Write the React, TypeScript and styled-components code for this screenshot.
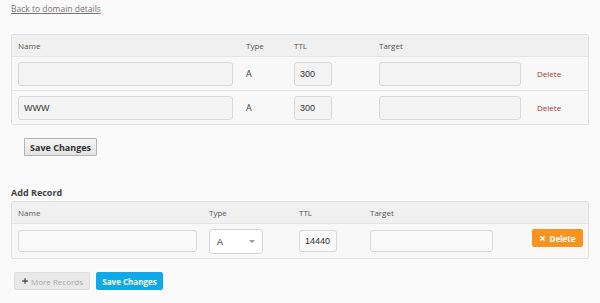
import React from "react";
import styled, { createGlobalStyle } from "styled-components";
import { Plus, X } from "lucide-react";

const GlobalStyle = createGlobalStyle`
  body {
    margin: 0;
    background: #fafafa;
    font-family: "Open Sans", "Liberation Sans", sans-serif;
    color: #555;
  }
`;

interface IRecord {
  name: string;
  type: string;
  ttl: string;
  target: string;
}

const records: IRecord[] = [
  { name: "", type: "A", ttl: "300", target: "" },
  { name: "WWW", type: "A", ttl: "300", target: "" },
];

export default function App() {
  return (
    <>
      <GlobalStyle />
      <Page>
        <BackLink href="#">Back to domain details</BackLink>

        <Table $top={19}>
          <HeadRow>
            <HeadCell>Name</HeadCell>
            <HeadCell>Type</HeadCell>
            <HeadCell>TTL</HeadCell>
            <HeadCell>Target</HeadCell>
            <HeadCell />
          </HeadRow>
          {records.map((r, i) => (
            <Row key={i}>
              <Field $width={215} defaultValue={r.name} />
              <TypeText>{r.type}</TypeText>
              <Field $width={38} defaultValue={r.ttl} />
              <Field $width={142} defaultValue={r.target} />
              <DeleteLink href="#">Delete</DeleteLink>
            </Row>
          ))}
        </Table>

        <GreyButton>Save Changes</GreyButton>

        <SectionTitle>Add Record</SectionTitle>
        <Table $top={2}>
          <AddHeadRow>
            <HeadCell>Name</HeadCell>
            <HeadCell>Type</HeadCell>
            <HeadCell>TTL</HeadCell>
            <HeadCell>Target</HeadCell>
            <HeadCell />
          </AddHeadRow>
          <AddRow>
            <Field $width={179} $light defaultValue="" />
            <SelectBox>
              <span>A</span>
              <Caret />
            </SelectBox>
            <Field $width={38} $light defaultValue="14440" />
            <Field $width={123} $light defaultValue="" />
            <OrangeButton>
              <X size={7} strokeWidth={5} />
              Delete
            </OrangeButton>
          </AddRow>
        </Table>

        <ButtonBar>
          <MoreButton>
            <Plus size={8} strokeWidth={4} color="#555" />
            More Records
          </MoreButton>
          <BlueButton>Save Changes</BlueButton>
        </ButtonBar>
      </Page>
    </>
  );
}

const Page = styled.div`
  width: 578px;
  padding: 0 11px;
  display: flex;
  flex-direction: column;
  align-items: flex-start;
`;

const BackLink = styled.a`
  margin-top: 3px;
  font-size: 8.5px;
  line-height: 12px;
  color: #777;
  text-decoration: underline;
`;

const Table = styled.div<{ $top: number }>`
  align-self: stretch;
  margin-top: ${(p) => p.$top}px;
  border: 1px solid #e2e2e2;
  border-radius: 2px;
  background: #f8f8f8;
`;

const HeadRow = styled.div`
  display: grid;
  grid-template-columns: 228px 48px 85px 158px 1fr;
  align-items: center;
  height: 21px;
  padding-left: 6px;
  background: #f0f0f0;
  border-bottom: 1px solid #e4e4e4;
`;

const HeadCell = styled.div`
  font-size: 8px;
  color: #555;
`;

const Row = styled.div`
  display: grid;
  grid-template-columns: 228px 48px 85px 158px 1fr;
  align-items: center;
  height: 33px;
  padding-left: 6px;
  & + & {
    border-top: 1px solid #e4e4e4;
  }
`;

const Field = styled.input<{ $width: number; $light?: boolean }>`
  box-sizing: border-box;
  width: ${(p) => p.$width}px;
  height: ${(p) => (p.$light ? 22 : 24)}px;
  padding: 0 5px;
  border: 1px solid #d9d9d9;
  border-radius: 3px;
  background: ${(p) => (p.$light ? "#f9f9f9" : "#f3f3f3")};
  font-family: "Liberation Sans", Arial, sans-serif;
  font-size: 9px;
  color: #333;
  outline: none;
`;

const TypeText = styled.div`
  font-size: 9px;
  color: #444;
`;

const DeleteLink = styled.a`
  font-size: 8px;
  color: #a8353a;
  text-decoration: none;
`;

const GreyButton = styled.button`
  margin: 13px 0 0 13px;
  height: 18px;
  padding: 0 5px;
  border: 1px solid #b3b3b3;
  border-radius: 1px;
  background: linear-gradient(#f6f6f6, #e2e2e2);
  font-family: "Open Sans", "Liberation Sans", sans-serif;
  font-weight: 700;
  font-size: 9px;
  color: #333;
`;

const SectionTitle = styled.div`
  margin-top: 31px;
  font-size: 9px;
  font-weight: 700;
  line-height: 12px;
  color: #444;
`;

const AddHeadRow = styled(HeadRow)`
  grid-template-columns: 191px 90px 71px 162px 1fr;
`;

const AddRow = styled.div`
  display: grid;
  grid-template-columns: 191px 90px 71px 162px 1fr;
  align-items: start;
  height: 34px;
  padding: 6px 0 0 6px;
  box-sizing: border-box;
`;

const SelectBox = styled.div`
  box-sizing: border-box;
  width: 54px;
  height: 25px;
  margin-top: -1px;
  padding: 0 7px;
  display: flex;
  align-items: center;
  justify-content: space-between;
  background: #fff;
  border: 1px solid #d6d6d6;
  border-radius: 3px;
  font-family: "Liberation Sans", Arial, sans-serif;
  font-size: 9px;
  color: #222;
`;

const Caret = styled.span`
  width: 0;
  height: 0;
  border-left: 3px solid transparent;
  border-right: 3px solid transparent;
  border-top: 3px solid #999;
`;

const OrangeButton = styled.button`
  justify-self: start;
  margin-top: -1px;
  width: 51px;
  height: 18px;
  display: flex;
  align-items: center;
  justify-content: center;
  gap: 3px;
  border: none;
  border-radius: 2px;
  background: #f7931e;
  color: #fff;
  font-family: "Open Sans", "Liberation Sans", sans-serif;
  font-weight: 700;
  font-size: 8px;
`;

const ButtonBar = styled.div`
  display: flex;
  gap: 6px;
  margin: 13px 0 0 3px;
`;

const MoreButton = styled.button`
  width: 76px;
  height: 18px;
  display: flex;
  align-items: center;
  justify-content: center;
  gap: 2px;
  border: 1px solid #dcdcdc;
  border-radius: 2px;
  background: #e9e9e9;
  color: #aaa;
  font-family: "Open Sans", "Liberation Sans", sans-serif;
  font-size: 8px;
`;

const BlueButton = styled.button`
  width: 67px;
  height: 18px;
  border: none;
  border-radius: 2px;
  background: #10a9e8;
  color: #fff;
  font-family: "Open Sans", "Liberation Sans", sans-serif;
  font-weight: 700;
  font-size: 8px;
`;
